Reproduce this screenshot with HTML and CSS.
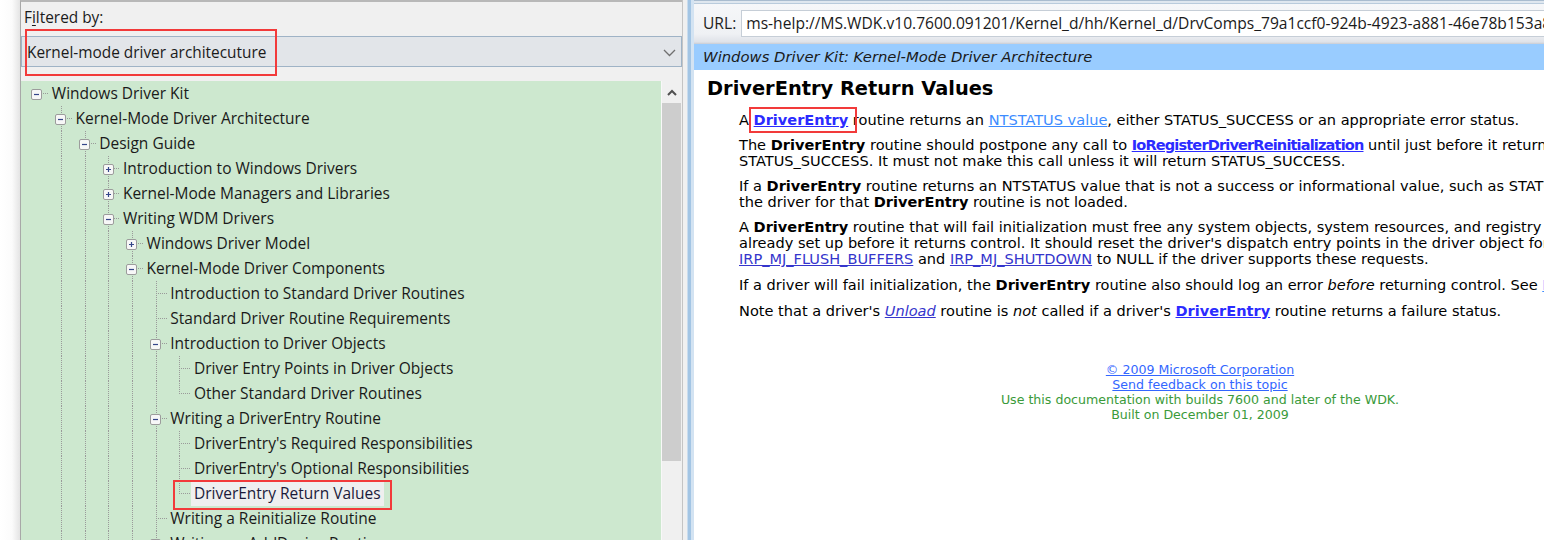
FILE: index.html
```html
<!DOCTYPE html>
<html>
<head>
<meta charset="utf-8">
<title>WDK Help</title>
<link rel="stylesheet" href="styles.css">
</head>
<body>
<div class="screen">
  <div class="edge"></div>
  <div class="left">
    <div class="filter-label">F<u>i</u>ltered by:</div>
    <div class="combo">
      <span>Kernel-mode driver architecuture</span>
      <svg class="chev" width="13" height="8" viewBox="0 0 13 8"><polyline points="1,1 6.5,6.5 12,1" fill="none" stroke="#707070" stroke-width="1.3"/></svg>
    </div>
    <div class="mark-combo"></div>
    <div class="tree-area">
      <div class="tree">
        <div class="row"><span class="node root"><svg width="11" height="11" viewBox="0 0 11 11"><rect x="0.5" y="0.5" width="10" height="10" rx="1.5" fill="#f7f7f7" stroke="#9c9c9c"/><path d="M3 5.5h5" stroke="#34458a" stroke-width="1.2"/></svg></span><span class="label">Windows Driver Kit</span></div>
        <div class="row"><span class="col"></span><span class="node"><svg width="11" height="11" viewBox="0 0 11 11"><rect x="0.5" y="0.5" width="10" height="10" rx="1.5" fill="#f7f7f7" stroke="#9c9c9c"/><path d="M3 5.5h5" stroke="#34458a" stroke-width="1.2"/></svg></span><span class="label">Kernel-Mode Driver Architecture</span></div>
        <div class="row"><span class="col"></span><span class="col g"></span><span class="node"><svg width="11" height="11" viewBox="0 0 11 11"><rect x="0.5" y="0.5" width="10" height="10" rx="1.5" fill="#f7f7f7" stroke="#9c9c9c"/><path d="M3 5.5h5" stroke="#34458a" stroke-width="1.2"/></svg></span><span class="label">Design Guide</span></div>
        <div class="row"><span class="col"></span><span class="col g"></span><span class="col g"></span><span class="node"><svg width="11" height="11" viewBox="0 0 11 11"><rect x="0.5" y="0.5" width="10" height="10" rx="1.5" fill="#f7f7f7" stroke="#9c9c9c"/><path d="M3 5.5h5M5.5 3v5" stroke="#34458a" stroke-width="1.2"/></svg></span><span class="label">Introduction to Windows Drivers</span></div>
        <div class="row"><span class="col"></span><span class="col g"></span><span class="col g"></span><span class="node"><svg width="11" height="11" viewBox="0 0 11 11"><rect x="0.5" y="0.5" width="10" height="10" rx="1.5" fill="#f7f7f7" stroke="#9c9c9c"/><path d="M3 5.5h5M5.5 3v5" stroke="#34458a" stroke-width="1.2"/></svg></span><span class="label">Kernel-Mode Managers and Libraries</span></div>
        <div class="row"><span class="col"></span><span class="col g"></span><span class="col g"></span><span class="node"><svg width="11" height="11" viewBox="0 0 11 11"><rect x="0.5" y="0.5" width="10" height="10" rx="1.5" fill="#f7f7f7" stroke="#9c9c9c"/><path d="M3 5.5h5" stroke="#34458a" stroke-width="1.2"/></svg></span><span class="label">Writing WDM Drivers</span></div>
        <div class="row"><span class="col"></span><span class="col g"></span><span class="col g"></span><span class="col g"></span><span class="node"><svg width="11" height="11" viewBox="0 0 11 11"><rect x="0.5" y="0.5" width="10" height="10" rx="1.5" fill="#f7f7f7" stroke="#9c9c9c"/><path d="M3 5.5h5M5.5 3v5" stroke="#34458a" stroke-width="1.2"/></svg></span><span class="label">Windows Driver Model</span></div>
        <div class="row"><span class="col"></span><span class="col g"></span><span class="col g"></span><span class="col g"></span><span class="node"><svg width="11" height="11" viewBox="0 0 11 11"><rect x="0.5" y="0.5" width="10" height="10" rx="1.5" fill="#f7f7f7" stroke="#9c9c9c"/><path d="M3 5.5h5" stroke="#34458a" stroke-width="1.2"/></svg></span><span class="label">Kernel-Mode Driver Components</span></div>
        <div class="row"><span class="col"></span><span class="col g"></span><span class="col g"></span><span class="col g"></span><span class="col g"></span><span class="node"></span><span class="label">Introduction to Standard Driver Routines</span></div>
        <div class="row"><span class="col"></span><span class="col g"></span><span class="col g"></span><span class="col g"></span><span class="col g"></span><span class="node"></span><span class="label">Standard Driver Routine Requirements</span></div>
        <div class="row"><span class="col"></span><span class="col g"></span><span class="col g"></span><span class="col g"></span><span class="col g"></span><span class="node"><svg width="11" height="11" viewBox="0 0 11 11"><rect x="0.5" y="0.5" width="10" height="10" rx="1.5" fill="#f7f7f7" stroke="#9c9c9c"/><path d="M3 5.5h5" stroke="#34458a" stroke-width="1.2"/></svg></span><span class="label">Introduction to Driver Objects</span></div>
        <div class="row"><span class="col"></span><span class="col g"></span><span class="col g"></span><span class="col g"></span><span class="col g"></span><span class="col g"></span><span class="node"></span><span class="label">Driver Entry Points in Driver Objects</span></div>
        <div class="row"><span class="col"></span><span class="col g"></span><span class="col g"></span><span class="col g"></span><span class="col g"></span><span class="col g"></span><span class="node last"></span><span class="label">Other Standard Driver Routines</span></div>
        <div class="row"><span class="col"></span><span class="col g"></span><span class="col g"></span><span class="col g"></span><span class="col g"></span><span class="node"><svg width="11" height="11" viewBox="0 0 11 11"><rect x="0.5" y="0.5" width="10" height="10" rx="1.5" fill="#f7f7f7" stroke="#9c9c9c"/><path d="M3 5.5h5" stroke="#34458a" stroke-width="1.2"/></svg></span><span class="label">Writing a DriverEntry Routine</span></div>
        <div class="row"><span class="col"></span><span class="col g"></span><span class="col g"></span><span class="col g"></span><span class="col g"></span><span class="col g"></span><span class="node"></span><span class="label">DriverEntry's Required Responsibilities</span></div>
        <div class="row"><span class="col"></span><span class="col g"></span><span class="col g"></span><span class="col g"></span><span class="col g"></span><span class="col g"></span><span class="node"></span><span class="label">DriverEntry's Optional Responsibilities</span></div>
        <div class="row"><span class="col"></span><span class="col g"></span><span class="col g"></span><span class="col g"></span><span class="col g"></span><span class="col g"></span><span class="node last"></span><span class="label selected">DriverEntry Return Values</span></div>
        <div class="row"><span class="col"></span><span class="col g"></span><span class="col g"></span><span class="col g"></span><span class="col g"></span><span class="node"></span><span class="label">Writing a Reinitialize Routine</span></div>
        <div class="row"><span class="col"></span><span class="col g"></span><span class="col g"></span><span class="col g"></span><span class="col g"></span><span class="node"><svg width="11" height="11" viewBox="0 0 11 11"><rect x="0.5" y="0.5" width="10" height="10" rx="1.5" fill="#f7f7f7" stroke="#9c9c9c"/><path d="M3 5.5h5" stroke="#34458a" stroke-width="1.2"/></svg></span><span class="label">Writing an AddDevice Routine</span></div>
      </div>
      <div class="vscroll">
        <div class="sb-arrow"><svg width="10" height="7" viewBox="0 0 10 7"><polyline points="1,6 5,2 9,6" fill="none" stroke="#505050" stroke-width="2"/></svg></div>
        <div class="sb-thumb"></div>
      </div>
    </div>
  </div>
  <div class="split"></div>
  <div class="right">
    <div class="urlbar">
      <span class="url-label">URL:</span>
      <div class="url-field">ms-help://MS.WDK.v10.7600.091201/Kernel_d/hh/Kernel_d/DrvComps_79a1ccf0-924b-4923-a881-46e78b153a8e.xml.htm</div>
    </div>
    <div class="doc">
      <div class="banner">Windows Driver Kit: Kernel-Mode Driver Architecture</div>
      <h1>DriverEntry Return Values</h1>
      <div class="body">
        <p>A <span class="marked"><a class="lk-b" href="#">DriverEntry</a></span> routine returns an <a class="lk-l" href="#">NTSTATUS value</a>, either STATUS_SUCCESS or an appropriate error status.</p>
        <p>The <b>DriverEntry</b> routine should postpone any call to <a class="lk-b tight" href="#">IoRegisterDriverReinitialization</a> until just before it returns<br>STATUS_SUCCESS. It must not make this call unless it will return STATUS_SUCCESS.</p>
        <p>If a <b>DriverEntry</b> routine returns an NTSTATUS value that is not a success or informational value, such as STATUS_UNSUCCESSFUL,<br>the driver for that <b>DriverEntry</b> routine is not loaded.</p>
        <p>A <b>DriverEntry</b> routine that will fail initialization must free any system objects, system resources, and registry resources that it has<br>already set up before it returns control. It should reset the driver's dispatch entry points in the driver object for<br><a class="lk-v" href="#">IRP_MJ_FLUSH_BUFFERS</a> and <a class="lk-v" href="#">IRP_MJ_SHUTDOWN</a> to NULL if the driver supports these requests.</p>
        <p>If a driver will fail initialization, the <b>DriverEntry</b> routine also should log an error <i>before</i> returning control. See <a class="lk-l" href="#">Logging Errors</a>.</p>
        <p>Note that a driver's <a class="lk-v" href="#"><i>Unload</i></a> routine is <i>not</i> called if a driver's <a class="lk-b" href="#">DriverEntry</a> routine returns a failure status.</p>
      </div>
      <div class="footer">
        <a href="#">© 2009 Microsoft Corporation</a><br>
        <a href="#">Send feedback on this topic</a><br>
        Use this documentation with builds 7600 and later of the WDK.<br>
        Built on December 01, 2009
      </div>
    </div>
  </div>
</div>
</body>
</html>
```

FILE: styles.css
```css
* { box-sizing: border-box; }
html, body { margin: 0; padding: 0; }
body {
  width: 1544px;
  height: 540px;
  overflow: hidden;
  background: #ffffff;
  font-family: "Open Sans", "Noto Sans", sans-serif;
  color: #1b1b1b;
}
.screen { display: flex; height: 540px; }

.edge {
  width: 20px;
  flex: none;
  background: linear-gradient(to right, #ffffff 0, #fbfbfb 12px, #e4e4e4 20px);
}

/* left pane */
.left {
  width: 662px;
  flex: none;
  position: relative;
  display: flex;
  flex-direction: column;
  background: #f0f0f0;
  border-left: 1px solid #a8a8a8;
  border-top: 2px solid #b8b8b8;
}
.filter-label {
  height: 34px;
  padding-left: 3px;
  font-size: 15.4px;
  line-height: 31px;
}
.filter-label u { text-underline-offset: 2px; }
.combo {
  height: 31px;
  flex: none;
  display: flex;
  align-items: center;
  justify-content: space-between;
  padding: 1px 5px 0 5px;
  background: #e2e5e9;
  border: 1px solid #9fb3c6;
  font-size: 15.4px;
}
.chev { margin-top: 1px; }
.mark-combo {
  position: absolute;
  left: 4px;
  top: 27px;
  width: 252px;
  height: 47px;
  border: 2px solid #f23a3a;
}

.tree-area {
  flex: 1;
  min-height: 0;
  margin-top: 14px;
  display: flex;
  overflow: hidden;
}
.tree {
  flex: 1;
  background: #cde8cf;
  padding-left: 4.15px;
  font-size: 15.5px;
  color: #1a1a1a;
}
.row {
  display: flex;
  align-items: center;
  height: 25px;
  white-space: nowrap;
}
.col, .node {
  flex: none;
  width: 23.7px;
  height: 25px;
}
.col.g {
  background-image: repeating-linear-gradient(to bottom, #9a9a9a 0 1px, transparent 1px 2px);
  background-size: 1px 100%;
  background-position: 12px 0;
  background-repeat: no-repeat;
}
.node {
  display: flex;
  align-items: center;
  justify-content: center;
  background-image:
    repeating-linear-gradient(to right, #9a9a9a 0 1px, transparent 1px 2px),
    repeating-linear-gradient(to bottom, #9a9a9a 0 1px, transparent 1px 2px);
  background-size: 12px 1px, 1px 100%;
  background-position: 12px 12px, 12px 0;
  background-repeat: no-repeat;
}
.node.last {
  background-size: 12px 1px, 1px 13px;
}
.node.root {
  background-image: repeating-linear-gradient(to right, #9a9a9a 0 1px, transparent 1px 2px);
  background-size: 12px 1px;
  background-position: 12px 12px;
}
.node svg { display: block; margin-top: 1px; }
.label {
  display: inline-block;
  height: 25px;
  line-height: 25px;
  padding: 0 3px;
  position: relative;
}
.label.selected {
  background: #efefef;
  color: #1a1a3a;
}
.label.selected::after {
  content: "";
  position: absolute;
  left: -18px;
  right: -8px;
  top: -1px;
  bottom: -4px;
  border: 2px solid #f23a3a;
}

.vscroll {
  width: 21px;
  flex: none;
  background: #f0f0f0;
  border-left: 1px solid #f8f8f8;
  padding-right: 1px;
}
.sb-arrow {
  height: 22px;
  display: flex;
  align-items: center;
  justify-content: center;
}
.sb-thumb {
  height: 358px;
  background: #cdcdcd;
}

/* splitter */
.split {
  width: 12px;
  flex: none;
  background: linear-gradient(to right,
    #c4c4c4 0 1px, #f0f0f0 1px 5px, #c9dcee 5px 6px,
    #a3c5e4 6px 9px, #d3e3f2 9px 12px);
}

/* right pane */
.right {
  flex: 1;
  min-width: 0;
  overflow: hidden;
  background: #ffffff;
}
.urlbar {
  height: 44px;
  display: flex;
  align-items: center;
  padding-left: 9px;
  background: linear-gradient(to bottom,
    #a9bccf 0 1px, #dfe7ef 1px 3px, #b9cbdc 3px 4px,
    #f6f7f9 4px, #eff1f4 34px, #dfe2e8 42px, #c8ccd4 44px);
  font-size: 15.6px;
  white-space: nowrap;
}
.url-label { color: #222; margin-top: 1px; }
.url-field {
  margin-left: 5px;
  flex: none;
  height: 27px;
  margin-top: 3px;
  line-height: 25px;
  padding-left: 4px;
  padding-right: 40px;
  background: #ffffff;
  border: 1px solid #c6ced7;
  color: #1b1b1b;
}

.doc {
  width: 1012px;
  font-family: "DejaVu Sans", Verdana, sans-serif;
  color: #000;
}
.banner {
  height: 26px;
  line-height: 26px;
  padding-left: 9px;
  background: #99ccff;
  font-size: 14.8px;
  font-style: italic;
  color: #1a1a1a;
  white-space: nowrap;
}
h1 {
  margin: 7px 0 11px;
  padding-left: 13px;
  font-size: 19.4px;
  line-height: 24px;
  font-weight: bold;
}
.body {
  padding-left: 45px;
  font-size: 14.55px;
  line-height: 16px;
}
.body p {
  margin: 0 0 9px;
  white-space: nowrap;
}
.body p:nth-child(n+5) { margin-top: 10px; }
.body p:last-child { margin-bottom: 0; }
.marked {
  position: relative;
  display: inline-block;
}
.marked::after {
  content: "";
  position: absolute;
  left: -5px;
  right: -9px;
  top: -5px;
  bottom: -5px;
  border: 2px solid #f23a3a;
}
.lk-b { color: #2b2bff; font-weight: bold; text-decoration: underline; }
.lk-b.tight { letter-spacing: -0.85px; }
.lk-l { color: #3d8cff; text-decoration: underline; }
.lk-v { color: #3535cc; text-decoration: underline; }
.footer {
  margin-top: 43px;
  text-align: center;
  font-size: 12.6px;
  line-height: 15px;
  color: #3a9a3a;
}
.footer a { color: #3366ff; text-decoration: underline; }
```
